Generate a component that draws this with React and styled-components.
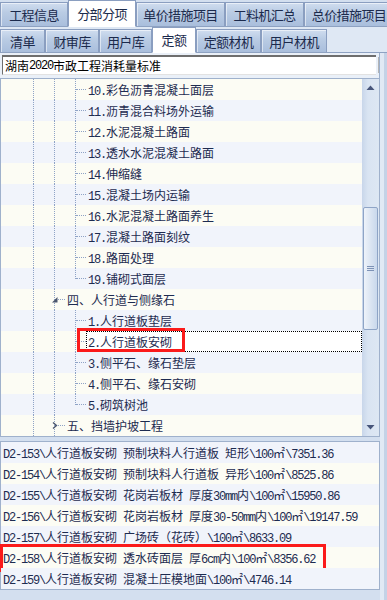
import React from "react";
import styled, { createGlobalStyle } from "styled-components";

const GlobalStyle = createGlobalStyle`
  html, body {
    margin: 0;
    padding: 0;
    background: #d3dfef;
  }
  body {
    font-family: "Noto Sans CJK SC", "Noto Sans CJK JP", sans-serif;
  }
`;

const INK = "#1d2b50";
const LINE = "#8fa3c6";

/* ASCII runs are drawn in a narrow mono face, as the old bitmap font did */
function Txt({ children }) {
  const parts = String(children).split(/([\x20-\x7e]+)/);
  return parts.map((p, i) => {
    if (!p) return null;
    if (/^[\x20-\x7e]+$/.test(p)) return <Latin key={i}>{p}</Latin>;
    return <span key={i}>{p}</span>;
  });
}

const topTabs = [
  { t: "工程信息", w: 68 },
  { t: "分部分项", w: 68, active: true },
  { t: "单价措施项目", w: 89 },
  { t: "工料机汇总", w: 79 },
  { t: "总价措施项目", w: 90 },
];

const subTabs = [
  { t: "清单", w: 45 },
  { t: "财审库", w: 54 },
  { t: "用户库", w: 53 },
  { t: "定额", w: 44, active: true },
  { t: "定额材机", w: 65 },
  { t: "用户材机", w: 66 },
];

const V = "v";
const T = "tee";
const E = "ell";
const O = "open";
const C = "closed";

const treeRows = [
  { g: [V, V, T], t: "10.彩色沥青混凝土面层" },
  { g: [V, V, T], t: "11.沥青混合料场外运输" },
  { g: [V, V, T], t: "12.水泥混凝土路面" },
  { g: [V, V, T], t: "13.透水水泥混凝土路面" },
  { g: [V, V, T], t: "14.伸缩缝" },
  { g: [V, V, T], t: "15.混凝土场内运输" },
  { g: [V, V, T], t: "16.水泥混凝土路面养生" },
  { g: [V, V, T], t: "17.混凝土路面刻纹" },
  { g: [V, V, T], t: "18.路面处理" },
  { g: [V, V, E], t: "19.铺砌式面层" },
  { g: [V, O], t: "四、人行道与侧缘石" },
  { g: [V, V, T], t: "1.人行道板垫层" },
  { g: [V, V, T], t: "2.人行道板安砌", sel: true },
  { g: [V, V, T], t: "3.侧平石、缘石垫层" },
  { g: [V, V, T], t: "4.侧平石、缘石安砌" },
  { g: [V, V, E], t: "5.砌筑树池" },
  { g: [V, C], t: "五、挡墙护坡工程" },
];

const quotas = [
  "D2-153\\人行道板安砌 预制块料人行道板 矩形\\100㎡\\7351.36",
  "D2-154\\人行道板安砌 预制块料人行道板 异形\\100㎡\\8525.86",
  "D2-155\\人行道板安砌 花岗岩板材 厚度30mm内\\100㎡\\15950.86",
  "D2-156\\人行道板安砌 花岗岩板材 厚度30-50mm内\\100㎡\\19147.59",
  "D2-157\\人行道板安砌 广场砖（花砖）\\100㎡\\8633.09",
  "D2-158\\人行道板安砌 透水砖面层 厚6cm内\\100㎡\\8356.62",
  "D2-159\\人行道板安砌 混凝土压模地面\\100㎡\\4746.14",
];

function Expander({ open }) {
  return (
    <ExpIcon width="9" height="9" viewBox="0 0 9 9">
      {open ? (
        <path d="M7.5 2 L7.5 7.5 L2 7.5 Z" fill="#4a566e" />
      ) : (
        <path
          d="M3 1.5 L6.5 4.5 L3 7.5"
          fill="none"
          stroke="#4a566e"
          strokeWidth="1.4"
        />
      )}
    </ExpIcon>
  );
}

function GuideCell({ kind }) {
  const v = kind === E ? "top" : "full";
  const h = kind !== V;
  return (
    <Guide $v={v} $h={h}>
      {(kind === O || kind === C) && <Expander open={kind === O} />}
    </Guide>
  );
}

export default function App() {
  return (
    <Page>
      <GlobalStyle />
      <TabRow $h={26} $bg="#d3dfef">
        {topTabs.map((tab) => (
          <Tab key={tab.t} $w={tab.w} $h={26} $active={tab.active}>
            {tab.t}
          </Tab>
        ))}
      </TabRow>
      <TabRow $h={25} $bg="#dfe8f4">
        {subTabs.map((tab) => (
          <Tab key={tab.t} $w={tab.w} $h={25} $active={tab.active}>
            {tab.t}
          </Tab>
        ))}
      </TabRow>

      <Body>
        <Main>
          <ComboBar>
            <ComboField>
              <Txt>湖南2020市政工程消耗量标准</Txt>
            </ComboField>
            <ComboButton />
          </ComboBar>

          <TreePanel>
            <TreeRows>
              {treeRows.map((row, i) => (
                <TreeRow key={row.t} $alt={i % 2 === 1}>
                  {row.g.map((k, j) => (
                    <GuideCell key={j} kind={k} />
                  ))}
                  <Label $selected={row.sel}>
                    <Txt>{row.t}</Txt>
                  </Label>
                  {row.sel && <RedMark $left={76} $top={-3} $w={108} $h={24} />}
                </TreeRow>
              ))}
            </TreeRows>
            <Scrollbar>
              <ScrollArrow>
                <svg width="9" height="5" viewBox="0 0 9 5">
                  <path d="M0.5 5 L4.5 0.5 L8.5 5 Z" fill="#47557a" />
                </svg>
              </ScrollArrow>
              <Track>
                <Thumb>
                  <Grip />
                  <Grip />
                  <Grip />
                </Thumb>
              </Track>
              <ScrollArrow>
                <svg width="9" height="5" viewBox="0 0 9 5">
                  <path d="M0.5 0 L4.5 4.5 L8.5 0 Z" fill="#47557a" />
                </svg>
              </ScrollArrow>
            </Scrollbar>
          </TreePanel>

          <ListPanel>
            {quotas.map((q, i) => (
              <ListRow key={q} $alt={i % 2 === 1}>
                <Txt>{q}</Txt>
                {i === 5 && <RedMark $left={-1} $top={-3} $w={326} $h={28} />}
              </ListRow>
            ))}
          </ListPanel>
        </Main>
        <Side />
      </Body>
    </Page>
  );
}

const Page = styled.div`
  width: 387px;
  height: 600px;
  overflow: hidden;
  background: #d3dfef;
  color: ${INK};
  font-size: 12px;
`;

const Latin = styled.span`
  font-family: "Liberation Mono", "DejaVu Sans Mono", monospace;
  font-size: 12px;
  letter-spacing: -1.2px;
`;

const TabRow = styled.div`
  display: flex;
  align-items: flex-end;
  height: ${(p) => p.$h}px;
  border-bottom: 1px solid #8ea2c2;
  background: ${(p) => p.$bg};
  white-space: nowrap;
`;

const Tab = styled.div`
  flex: none;
  box-sizing: border-box;
  width: ${(p) => p.$w}px;
  height: ${(p) => (p.$active ? p.$h + 1 : p.$h - 2)}px;
  margin-bottom: ${(p) => (p.$active ? -1 : 0)}px;
  display: flex;
  align-items: center;
  justify-content: center;
  padding-bottom: ${(p) => (p.$active ? 1 : 0)}px;
  font-size: 13px;
  letter-spacing: -0.6px;
  color: #1b2a4c;
  border: 1px solid #8a9ec0;
  border-bottom: ${(p) => (p.$active ? "1px solid #fff" : "none")};
  background: ${(p) =>
    p.$active
      ? "#ffffff"
      : "linear-gradient(180deg, #d0ddef 0%, #bacce4 40%, #a9bedc 100%)"};
  box-shadow: ${(p) =>
    p.$active ? "none" : "inset 1px 1px 0 rgba(255, 255, 255, 0.55)"};
`;

const Body = styled.div`
  display: flex;
`;

const Main = styled.div`
  flex: none;
  width: 380px;
  display: flex;
  flex-direction: column;
`;

const Side = styled.div`
  flex: 1;
  height: 548px;
  background: linear-gradient(90deg, #e1e9f4 0, #e1e9f4 4px, #c4d2e6 4px);
`;

const ComboBar = styled.div`
  height: 25px;
  box-sizing: border-box;
  padding: 2px 0 0 2px;
  display: flex;
  gap: 2px;
  overflow: hidden;
  background: #eaf0f8;
  border-right: 1px solid #9cb0cc;
`;

const ComboField = styled.div`
  flex: none;
  box-sizing: border-box;
  width: 374px;
  height: 20px;
  padding-left: 2px;
  display: flex;
  align-items: center;
  white-space: nowrap;
  color: #000;
  background: #fff;
  border-top: 2px solid #6e6e6e;
  border-left: 1px solid #6e6e6e;
  border-bottom: 1px solid #e2e2e2;
`;

const ComboButton = styled.div`
  flex: none;
  width: 17px;
  height: 16px;
  margin-top: 2px;
  box-sizing: border-box;
  border: 1px solid #b4b4b4;
  background: linear-gradient(180deg, #f2f2f2, #dcdcdc);
`;

const TreePanel = styled.div`
  box-sizing: border-box;
  height: 359px;
  display: flex;
  border: 1px solid #9fb1cc;
  background: #fcfcf4;
`;

const TreeRows = styled.div`
  flex: none;
  width: 361px;
  overflow: hidden;
`;

const TreeRow = styled.div`
  position: relative;
  display: flex;
  align-items: center;
  height: 21px;
  padding-left: 22px;
  background: ${(p) => (p.$alt ? "#f1f4fb" : "#fcfcf4")};
`;

const Guide = styled.span`
  position: relative;
  flex: none;
  width: 21px;
  height: 21px;

  &::before {
    content: "";
    position: absolute;
    left: 10px;
    top: 0;
    height: ${(p) => (p.$v === "top" ? 11 : 21)}px;
    border-left: 1px dotted ${LINE};
  }

  &::after {
    content: "";
    position: absolute;
    left: 11px;
    top: 10px;
    width: ${(p) => (p.$h ? 10 : 0)}px;
    border-top: 1px dotted ${LINE};
  }
`;

const ExpIcon = styled.svg`
  position: absolute;
  left: 6px;
  top: 6px;
  z-index: 1;
`;

const Label = styled.span`
  box-sizing: border-box;
  height: 21px;
  line-height: 19px;
  padding-left: 1px;
  white-space: nowrap;
  border: 1px ${(p) => (p.$selected ? "dotted #000" : "solid transparent")};
  background: ${(p) => (p.$selected ? "#fff" : "transparent")};
  flex: ${(p) => (p.$selected ? 1 : "none")};
`;

const RedMark = styled.div`
  position: absolute;
  left: ${(p) => p.$left}px;
  top: ${(p) => p.$top}px;
  width: ${(p) => p.$w}px;
  height: ${(p) => p.$h}px;
  box-sizing: border-box;
  border: 3px solid #fb1a1a;
  pointer-events: none;
`;

const Scrollbar = styled.div`
  flex: none;
  width: 17px;
  display: flex;
  flex-direction: column;
  background: linear-gradient(90deg, #c8d6ea 0%, #d9e4f2 35%, #dde7f3 100%);
`;

const ScrollArrow = styled.div`
  height: 17px;
  display: flex;
  align-items: center;
  justify-content: center;
`;

const Track = styled.div`
  flex: 1;
`;

const Thumb = styled.div`
  box-sizing: border-box;
  margin: 111px 1px 0;
  height: 123px;
  border: 1px solid #8ea4c6;
  border-radius: 2px;
  background: linear-gradient(90deg, #eef3fa 0%, #dbe5f2 50%, #c9d8ec 100%);
  display: flex;
  flex-direction: column;
  align-items: center;
  justify-content: center;
  gap: 1px;
`;

const Grip = styled.span`
  width: 7px;
  height: 1px;
  background: #7d92b6;
`;

const ListPanel = styled.div`
  margin-top: 4px;
  box-sizing: border-box;
  border: 1px solid #9fb1cc;
`;

const ListRow = styled.div`
  position: relative;
  height: 21px;
  line-height: 21px;
  padding-left: 2px;
  white-space: nowrap;
  background: ${(p) => (p.$alt ? "#fcfcf4" : "#f1f4fb")};
`;
